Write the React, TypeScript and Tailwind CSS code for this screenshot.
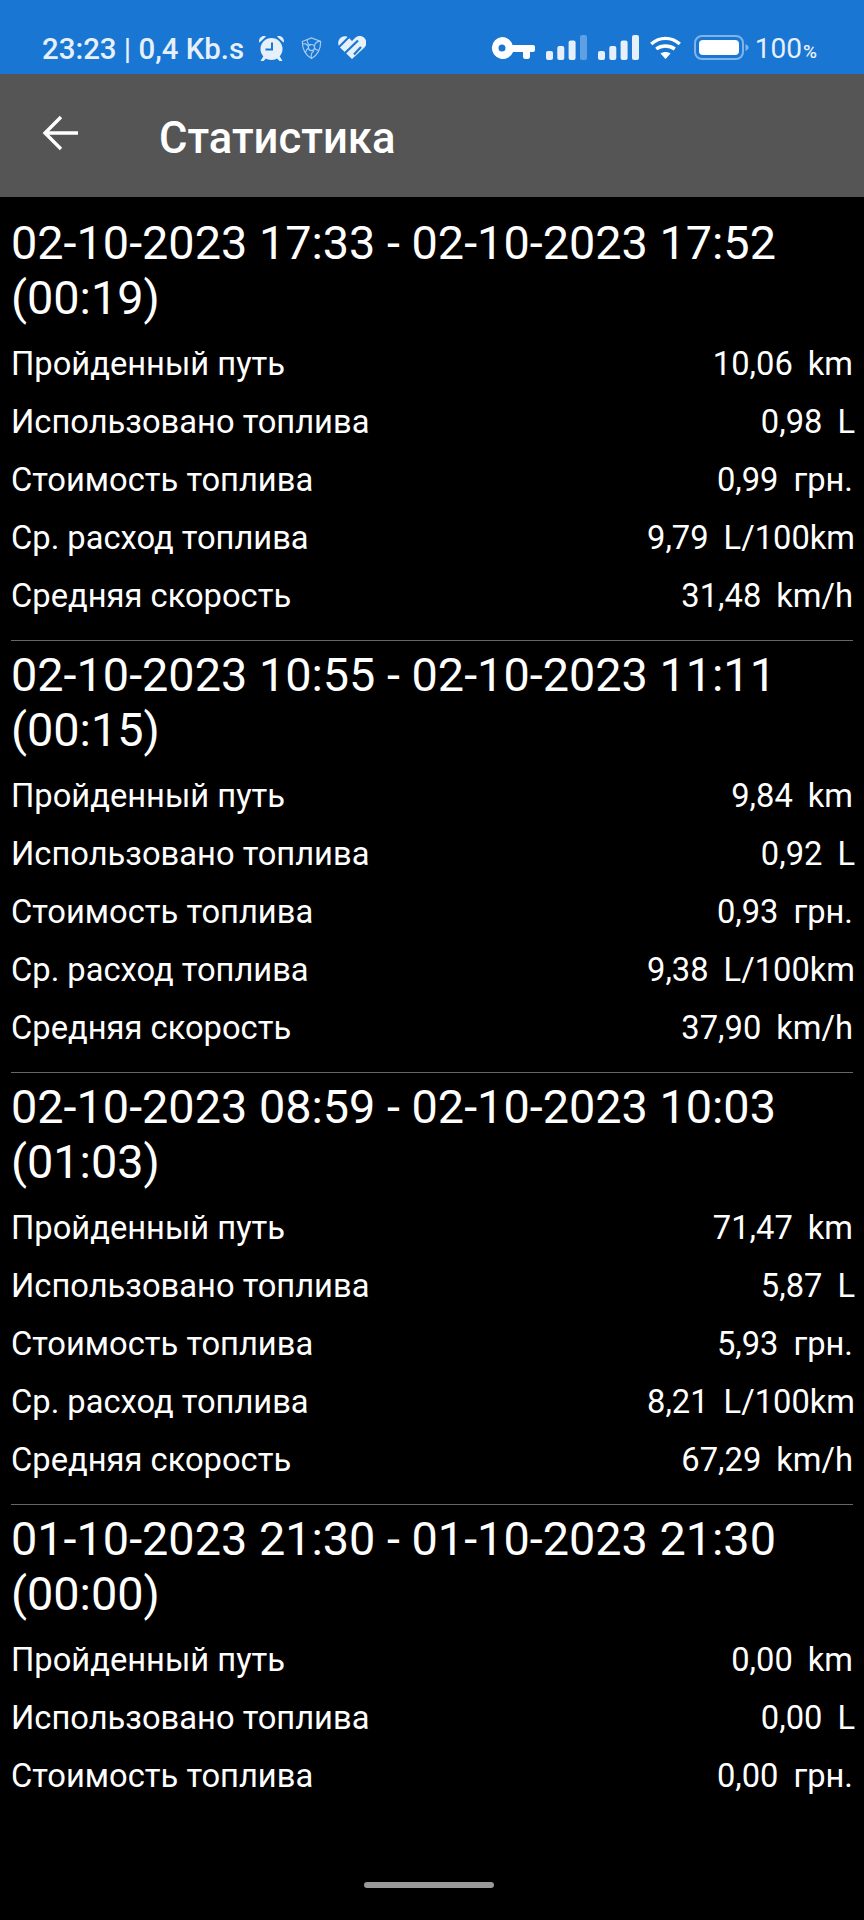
const sections = [
  { title: "02-10-2023 17:33 - 02-10-2023 17:52 (00:19)", rows: ["10,06 km", "0,98 L", "0,99 грн.", "9,79 L/100km", "31,48 km/h"] },
  { title: "02-10-2023 10:55 - 02-10-2023 11:11 (00:15)", rows: ["9,84 km", "0,92 L", "0,93 грн.", "9,38 L/100km", "37,90 km/h"] },
  { title: "02-10-2023 08:59 - 02-10-2023 10:03 (01:03)", rows: ["71,47 km", "5,87 L", "5,93 грн.", "8,21 L/100km", "67,29 km/h"] },
  { title: "01-10-2023 21:30 - 01-10-2023 21:30 (00:00)", rows: ["0,00 km", "0,00 L", "0,00 грн."] },
];
const labels = ["Пройденный путь", "Использовано топлива", "Стоимость топлива", "Ср. расход топлива", "Средняя скорость"];

function Alarm() {
  return (
    <svg width="27" height="26" viewBox="0 0 27 26" fill="#e6f0fb">
      <circle cx="13.500" cy="14" r="11" />
      <path d="M1 6.500C1 2.500 4.500 0 8 1.500L1.500 7.500Z M26 6.500C26 2.500 22.500 0 19 1.500L25.500 7.500Z M5.500 21 2.500 26h3l3-3Z M21.500 21l3 5h-3l-3-3Z" />
      <path d="M14 7.500v7H7.500" fill="none" stroke="#1976d2" strokeWidth="2" />
    </svg>
  );
}
function Shield() {
  return (
    <svg width="21" height="22" viewBox="0 0 24 25" fill="none" stroke="#a9cdf2" strokeWidth="1.300">
      <path d="M1.500 5 12 1l10.500 4c0 9-3.500 15.500-10.500 19.500C5 20.500 1.500 14 1.500 5Z" />
      <circle cx="12" cy="12" r="3.500" />
      <path d="M7 3c0 4 2 7 5 5.500M1.500 8c3-1 6 0 7 3.500M5 18c1-3 2-5 4-5M12 24.500c-1-4 0-7 3-8.500M20 15c-2 0-4-1-4.500-3M22 5c-3 0-6 1-6.500 5" />
    </svg>
  );
}
function Heart() {
  return (
    <svg width="28" height="23" viewBox="0 0 28 23">
      <path fill="#e6f0fb" d="M14 23 2 11.500C-1 8.500 0 3.500 3 1.500 6-.5 9 0 11 2l3 3 3-3c3-3 7-2.500 9.500 0s2.500 7 0 9.500Z" />
      <g stroke="#1976d2" strokeWidth="2.200" fill="none">
        <path d="M-1 13 11 1" />
        <path d="M6 18 20 4.500" />
        <path d="M16 18.500 23 11" />
      </g>
    </svg>
  );
}
function Key() {
  return (
    <svg width="44" height="22" viewBox="0 0 44 22">
      <path fill="#fff" fillRule="evenodd" d="M11 0a11 11 0 0 1 10.600 8H42a2 2 0 0 1 2 2v3a2 2 0 0 1-2 2h-3v4.500a2.500 2.500 0 0 1-2.500 2.500h-2a2.500 2.500 0 0 1-2.500-2.500V15h-9.900A11 11 0 1 1 11 0Zm0 7.500a3.500 3.500 0 1 0 0 7 3.500 3.500 0 0 0 0-7Z" />
    </svg>
  );
}
function Signal({ dim }: { dim?: boolean }) {
  return (
    <svg width="41" height="25" viewBox="0 0 41 25">
      <rect x="0" y="16" width="7" height="9" rx="2" fill="#e6f0fb" />
      <rect x="11.300" y="11" width="7" height="14" rx="2" fill="#e6f0fb" />
      <rect x="22.600" y="5.500" width="7" height="19.500" rx="2" fill="#e6f0fb" />
      <rect x="34" y="0" width="7" height="25" rx="2" fill={dim ? "#5f9fe3" : "#e6f0fb"} />
    </svg>
  );
}
function Wifi() {
  return (
    <svg width="31" height="23" viewBox="0 0 31 23">
      <g fill="none" stroke="#fff" strokeWidth="3.400">
        <path d="M1.200 8C9.500 .5 21.500 .5 29.800 8" />
        <path d="M6.200 13c5.500-4 13-4 18.600 0" />
      </g>
      <path fill="#fff" d="M10.500 17.500c3-2 7-2 10 0l-5 5.500Z" />
    </svg>
  );
}
function Battery() {
  return (
    <svg width="55" height="25" viewBox="0 0 55 25">
      <rect x="1" y="1" width="48" height="23" rx="7" fill="none" stroke="#7fb3ea" strokeWidth="2" />
      <rect x="5" y="5" width="40" height="15" rx="4" fill="#fff" />
      <path d="M51.500 9c2 1 3 2 3 3.500s-1 2.500-3 3.500Z" fill="#7fb3ea" />
    </svg>
  );
}

export default function App() {
  return (
    <div className="h-[1920px] w-[864px] overflow-hidden bg-black text-white relative font-['Roboto',sans-serif]">
      <div className="h-[74px] bg-[#1976d2] flex items-center justify-between pt-[21px] pl-[42px] pr-[47px] text-[#e6f0fb]">
        <div className="flex items-center">
          <span className="mt-[3px] text-[29.400px] leading-[34px] font-medium">23:23 | 0,4 Kb.s</span>
          <span className="ml-[14px] flex items-center gap-[16px]">
            <Alarm />
            <Shield />
            <Heart />
          </span>
        </div>
        <div className="flex items-center">
          <Key />
          <span className="ml-[11px]"><Signal dim /></span>
          <span className="ml-[11px]"><Signal /></span>
          <span className="ml-[11px]"><Wifi /></span>
          <span className="ml-[13px]"><Battery /></span>
          <span className="ml-[6px] mt-[5px] text-[28px] leading-[34px]">100<span className="ml-[1px] text-[19px] font-medium">%</span></span>
        </div>
      </div>
      <div className="h-[123px] bg-[#555555] flex items-center">
        <svg className="ml-[42px] -mt-[5px]" width="37" height="36" viewBox="0 0 37 36" fill="none" stroke="#fff" strokeWidth="3.400">
          <path d="M36 18H4M19 2 3 18l16 16" />
        </svg>
        <span className="ml-[80px] mt-[6px] text-[43.600px] font-medium leading-[48px]">Статистика</span>
      </div>
      <div className="px-[11px] pt-[19px]">
        {sections.map((s, i) => (
          <div key={i} className={i ? "border-t border-[#666666] pt-[7px] mt-[14px]" : ""}>
            <div className="text-[46.800px] leading-[55px]">{s.title}</div>
            <div className="mt-[10px]">
              {s.rows.map((r, j) => {
                const [v, u] = r.split(" ");
                return (
                  <div key={j} className="flex justify-between h-[58px] items-center text-[32.700px]">
                    <span>{labels[j]}</span>
                    <span className={u.startsWith("L") ? "whitespace-nowrap -mr-[2px]" : "whitespace-nowrap"}>
                      {v}
                      <span className="ml-[15px]">{u}</span>
                    </span>
                  </div>
                );
              })}
            </div>
          </div>
        ))}
      </div>
      <div className="absolute left-[364px] top-[1882px] w-[130px] h-[6px] rounded-full bg-[#9a9a9a]" />
    </div>
  );
}
